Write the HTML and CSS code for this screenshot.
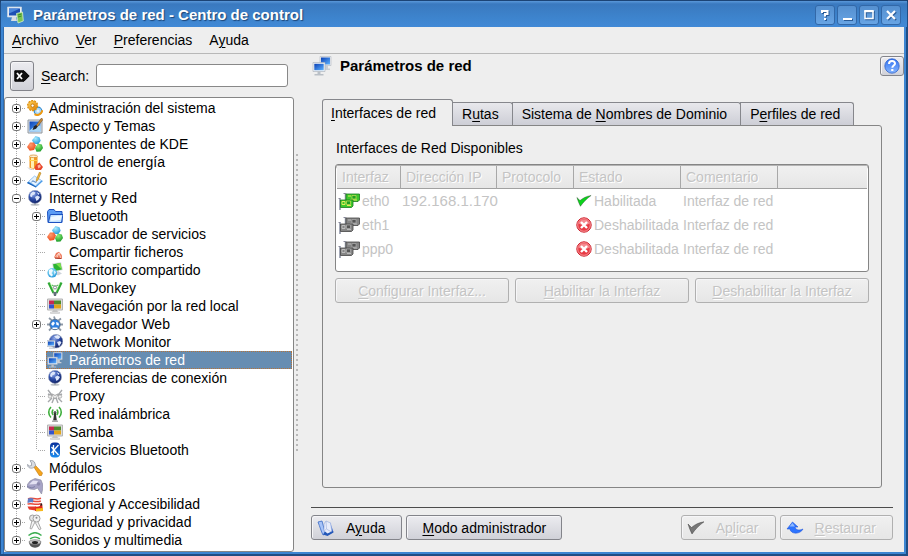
FILE: index.html
```html
<!DOCTYPE html>
<html lang="es">
<head>
<meta charset="utf-8">
<title>Parámetros de red - Centro de control</title>
<link rel="stylesheet" href="styles.css">
</head>
<body>
<svg class="defs" aria-hidden="true">
  <defs>
    <linearGradient id="g-screen" x1="0" y1="0" x2="1" y2="1"><stop offset="0" stop-color="#0a3fb5"/><stop offset="1" stop-color="#5fb4ff"/></linearGradient>
    <linearGradient id="g-orange" x1="0" y1="0" x2="1" y2="1"><stop offset="0" stop-color="#ffd75a"/><stop offset="1" stop-color="#e07a00"/></linearGradient>
    <linearGradient id="g-bt" x1="0" y1="0" x2="0" y2="1"><stop offset="0" stop-color="#0a2f9a"/><stop offset="1" stop-color="#1a8cf0"/></linearGradient>
    <radialGradient id="g-globe" cx=".38" cy=".3" r=".75"><stop offset="0" stop-color="#8fa8e8"/><stop offset=".5" stop-color="#2c4ca8"/><stop offset="1" stop-color="#0c1c5c"/></radialGradient>
    <radialGradient id="g-red" cx=".4" cy=".3" r=".7"><stop offset="0" stop-color="#ff9c70"/><stop offset="1" stop-color="#ee4a1a"/></radialGradient>
    <radialGradient id="g-green" cx=".4" cy=".3" r=".7"><stop offset="0" stop-color="#8ff07a"/><stop offset="1" stop-color="#1c9c28"/></radialGradient>
    <radialGradient id="g-cyan" cx=".4" cy=".3" r=".7"><stop offset="0" stop-color="#a8ecff"/><stop offset="1" stop-color="#2a9cdc"/></radialGradient>
    <linearGradient id="g-help" x1="0" y1="0" x2="0" y2="1"><stop offset="0" stop-color="#2f6ff0"/><stop offset="1" stop-color="#86b6ff"/></linearGradient>
    <linearGradient id="g-book" x1="0" y1="0" x2="1" y2="1"><stop offset="0" stop-color="#8ab0ff"/><stop offset="1" stop-color="#1c4cb8"/></linearGradient>
  </defs>
  <symbol id="i-gears" viewBox="0 0 16 16">
    <circle cx="11" cy="11" r="3.800" fill="#a9d6f7" stroke="#2f8ad0" stroke-width="1.200"/><circle cx="11" cy="11" r="1.500" fill="#e8f6ff"/>
    <path d="M7.500 14.200c3.500 2 7 0 8-4" fill="none" stroke="#f09a10" stroke-width="2"/>
    <circle cx="5.600" cy="5.600" r="4.900" fill="none" stroke="#e08e08" stroke-width="1.400" stroke-dasharray="2 1"/><circle cx="5.600" cy="5.600" r="4.500" fill="url(#g-orange)" stroke="#dd9010" stroke-width=".6"/><circle cx="5.600" cy="5.600" r="1.600" fill="#fff" stroke="#b66a00" stroke-width=".8"/>
  </symbol>
  <symbol id="i-brush" viewBox="0 0 16 16">
    <path d="M1 2h14v13H1z" fill="#dfe3e8" stroke="#9098a0"/><path d="M2.500 3.500h11v10h-11z" fill="url(#g-screen)"/><path d="M2.500 12.500l5-4 6-1v6h-11z" fill="#a9d8f8"/>
    <path d="M14.500 0L9 7.500l1.500 1.200L16 1.500z" fill="#c58a3c" stroke="#6a4416" stroke-width=".5"/><path d="M9 7l-2.200 1.300L5.500 12l3.600-1.200 1.600-2.300z" fill="#23242a"/>
  </symbol>
  <symbol id="i-balls" viewBox="0 0 16 16">
    <path d="M8.500 0l4 1.200 1.200 3.600-2.500 3.400-4.200-.5-2-3.500z" fill="url(#g-cyan)"/><path d="M3 6.500h4l2 3.300-2 4.200-4.200.8L0 11z" fill="url(#g-red)"/><path d="M11 7.500l3.800 1L16 12l-2.500 3.500-4 .2L8 12z" fill="url(#g-green)"/>
  </symbol>
  <symbol id="i-battery" viewBox="0 0 16 16">
    <path d="M2.500 2.500v11c0 1.500 8 1.500 8 0v-11z" fill="#f39a24"/><path d="M4 3v10.500c.8.500 2 .6 3 .6V3z" fill="#fff0b4"/><ellipse cx="6.500" cy="2.300" rx="4" ry="1.300" fill="#fff2d8" stroke="#d08428" stroke-width=".7"/><path d="M2.500 6h8v1h-8z" fill="#ffd24a"/>
    <path d="M9 10.500l3.500-2 1.800 2.500L16 13l-2 3H8.500l-1-2z" fill="#e8452a"/><path d="M10.500 11.500l2.500-1 .8 2.500-2.500 1.500z" fill="#ffb6a0"/><path d="M1 13.500c1 2 4 2.300 6 2" stroke="#ccc" fill="none"/>
  </symbol>
  <symbol id="i-desk" viewBox="0 0 16 16">
    <path d="M0 11L7 5l9 4-7 6.500z" fill="#4b9ae8"/><path d="M1.500 9.500L7.500 4l7 4.500-6 5.500z" fill="#e6f3ff" stroke="#76b4ee" stroke-width=".7"/><path d="M0 11l9 4.500v-1L1 10z" fill="#1c61b8"/>
    <path d="M12.500 0L9.500 7l-.3 2.500L11 8l3-7z" fill="#f4b93a" stroke="#a36e10" stroke-width=".5"/><path d="M4.500 10c2-2.500 3 1 5 0" stroke="#2b68b4" fill="none"/>
  </symbol>
  <symbol id="i-globe" viewBox="0 0 16 16">
    <ellipse cx="8" cy="14.700" rx="4.500" ry="1" fill="#bfc3c8"/><path d="M7 12h2v2.500H7z" fill="#8f949c"/><circle cx="8" cy="6.900" r="6.600" fill="url(#g-globe)" stroke="#a6b0c8" stroke-width=".6"/>
    <path d="M3.500 3.500l2.500-2 2.500 1-1 2-2 .8-.5 2-2-1zM8 7l2.500-1.500L13 7l-1.500 2.500L9.500 11zM9.500 2l3 1.500-1 1.500z" fill="#dce6fb"/>
  </symbol>
  <symbol id="i-folder" viewBox="0 0 16 16">
    <path d="M.5 3.500L2 1.500h5l1.500 2H15v11H1z" fill="#5a9cf4" stroke="#1c52c0"/><path d="M1.500 14l1.800-7.500H16l-1.500 8H1.500z" fill="#c2e2ff" stroke="#1c52c0"/><path d="M4 9l7-1.200L14.500 8l-1.200 4L3.500 13z" fill="#eef8ff"/>
  </symbol>
  <symbol id="i-shell" viewBox="0 0 16 16">
    <path d="M7 13.500L9 9l3-1.200L14.800 11l.3 3.200-4 .8z" fill="#ef7a5c"/><path d="M8.500 13l3.500-4 1.800 5M10 13.500l2-4.500" stroke="#ffe0d4" stroke-width=".8" fill="none"/><path d="M8 14.200l6.500.3" stroke="#a93a28"/>
  </symbol>
  <symbol id="i-share" viewBox="0 0 16 16">
    <path d="M5 1.500L14 0l2 8-9 2z" fill="#d9dde0"/><path d="M6 2.200l7.300-1.200 1.600 6.400L7.500 9z" fill="#2cb432"/><path d="M9 2l4.300-1 1.600 6.400z" fill="#7ee04e"/><path d="M11 9l4 2.500-4 2-3-1.500z" fill="#cdd3da"/>
    <circle cx="5.200" cy="10.800" r="4.800" fill="url(#g-cyan)"/><path d="M2 8l2.500-1 1.500 1.500L4.500 11 6 13l-1.500 1.500L2 12zM7 8.500l2 1.500-1.500 3z" fill="#f0faff"/>
  </symbol>
  <symbol id="i-donkey" viewBox="0 0 16 16">
    <path d="M1.500 2.500L6.500 13M14.500 2.500L9.500 13" stroke="#2fa834" stroke-width="2.200"/><path d="M3 2.500l4 9M13 2.500l-4 9" stroke="#9be88c" stroke-width=".7"/><path d="M5 5c2 1.500 4 1.500 6 0" fill="none" stroke="#3cb43c"/><circle cx="8" cy="7.500" r="1.500" fill="#fff" stroke="#8a8a9a"/><path d="M6 12h4l-1 4H7z" fill="#63707a"/>
  </symbol>
  <symbol id="i-screen" viewBox="0 0 16 16">
    <path d="M.5 1h15v11H.5z" fill="#dedede" stroke="#b4b4b4"/><path d="M2 2.500h5V6.500H2z" fill="#c62850"/><path d="M7 2.500h7V6.500H7z" fill="#4f8c2c"/><path d="M2 6.500h5v4H2z" fill="#3455cc"/><path d="M7 6.500h7v4H7z" fill="#e0a51c"/><path d="M6 12h4l1 2H5z" fill="#c4c4c4"/><path d="M3.500 14h9v1.500h-9z" fill="#e2e2e2" stroke="#bdbdbd" stroke-width=".5"/>
  </symbol>
  <symbol id="i-konq" viewBox="0 0 16 16">
    <path d="M2 2l3 2.500M7 .5l1 3M14 2.500l-2.500 2M0 8.500h3M13 8.500h3M2 14.500l3-3M14 14.500l-3-3" stroke="#8d98a6" stroke-width="1.800"/><circle cx="8" cy="8.500" r="5.200" fill="#2e80e0" stroke="#56687c" stroke-width=".8"/><path d="M4 8l2-2.500L8 7l-2 3zM9 6l2.500.8L12 9.500l-2.500-.5zM5.500 11.500h5V13h-5z" fill="#fff"/>
  </symbol>
  <symbol id="i-monitor" viewBox="0 0 16 16">
    <circle cx="9" cy="7.200" r="6.800" fill="url(#g-globe)" stroke="#8d9ab8" stroke-width=".6"/><path d="M7 2l4-1 2.500 2-2 2L9 4.500zM10 8l3-1 1.500 1.500-2.500 4z" fill="#dfe8fa"/><path d="M0 6.500h8v6H0z" fill="#eef2f6" stroke="#a4acb8" stroke-width=".6"/><path d="M1 7.500h6v4H1z" fill="url(#g-screen)"/><path d="M2 13.500h6v1.500H2z" fill="#d2d7dd"/>
  </symbol>
  <symbol id="i-net" viewBox="0 0 20 20">
    <path d="M8 .5h11v9H8z" fill="#e9edf1" stroke="#b1b7bf" stroke-width=".6"/><path d="M9 1.500h9v7H9z" fill="url(#g-screen)"/><path d="M13 10h3v2.500h2V14h-7v-1.500z" fill="#c9ced4"/>
    <path d="M1 6.500h12v9H1z" fill="#eef2f6" stroke="#a6adb7" stroke-width=".6"/><path d="M2.300 7.800h9.400v6.400H2.300z" fill="url(#g-screen)"/><path d="M5.500 15.500h3V18h3v1.500H2.500V18h3z" fill="#b9bfc6"/>
  </symbol>
  <symbol id="i-proxy" viewBox="0 0 16 16">
    <path d="M1 2l3 4 4 2 4-2 3-4M1 6l4 2M15 6l-4 2M5 15l2-5h2l2 5M1 14l4-4M15 14l-4-4" stroke="#a6a8ab" stroke-width="1.400" fill="none"/><circle cx="3" cy="8.500" r="1.700" fill="#eee" stroke="#9b9b9b" stroke-width=".7"/><circle cx="13" cy="8.500" r="1.700" fill="#eee" stroke="#9b9b9b" stroke-width=".7"/><path d="M5 6l3 1.500L11 6l-1.500 4h-3z" fill="#eee" stroke="#999" stroke-width=".6"/>
  </symbol>
  <symbol id="i-wifi" viewBox="0 0 16 16">
    <path d="M4 1C1 4 1 8.500 4 11.500M6.300 3.500c-1.600 1.500-1.600 4 0 5.500M12 1c3 3 3 7.500 0 10.500M9.700 3.500c1.600 1.500 1.600 4 0 5.500" fill="none" stroke="#3fae3c" stroke-width="1.600"/><circle cx="8" cy="6.500" r="1.500" fill="#555"/><path d="M7.200 7h1.600l1 7.500H6.200z" fill="#333"/><path d="M5 14.500h6V16H5z" fill="#aaa"/>
  </symbol>
  <symbol id="i-bt" viewBox="0 0 16 16">
    <rect x="3" y=".5" width="10" height="15" rx="4" fill="url(#g-bt)"/><path d="M6.500 3v10M11.500 3L7 8l4.500 5M4.500 5l2.500 3-2.500 3" fill="none" stroke="#fff" stroke-width="1.300"/>
  </symbol>
  <symbol id="i-wrench" viewBox="0 0 16 16">
    <path d="M6.500 6.500l2-1L15.500 13l-1 2.500-2 .3z" fill="#f6a51c" stroke="#bd7200" stroke-width=".6"/><path d="M.5 4.500l2 1.500 2-.5V3L3 .7C5 0 7.500 1 8 3.500l.7 2.300-2.400 2C4 8.800.5 8 .5 4.500z" fill="#d8dce2" stroke="#868d98" stroke-width=".7"/>
  </symbol>
  <symbol id="i-periph" viewBox="0 0 16 16">
    <path d="M0 7l3-4 5-2.500 6 1.500 2 5-.5 5-1 4-2-3-2-3-3 1.500L3 11 0 9z" fill="#a7a4c6" stroke="#87869c" stroke-width=".6"/><path d="M2 6.500l4-4 5 .5-1.500 3z" fill="#e3e1f2"/><path d="M0 8.500l5 1.500 3-1.500" stroke="#7e7ea6" fill="none"/><circle cx="11.500" cy="6" r="1.800" fill="#8d8aae"/>
  </symbol>
  <symbol id="i-flags" viewBox="0 0 16 16">
    <path d="M8 7l7 .5 1 7-8 .5z" fill="#e02818"/><path d="M8 7l7 .5.300 2L8 9.500z" fill="#222"/><path d="M9 12.500l7-.500v3l-7 .5z" fill="#f6b81c"/><path d="M1 2.500c4-2 7 1.500 13-.5l-1 8c-4 2-7-1-12 .5z" fill="#fff"/><path d="M1 2.800c4-2 7 1.500 13-.5M.8 5.500c4-2 7 1.500 13-.5M.5 8.200c4-2 7 1.500 13-.5" stroke="#e84a3a" stroke-width="1.500" fill="none"/><path d="M1 2.500c2-1 4-.5 5.500 0l-.5 4c-2-.5-3.500-.5-5.500.500z" fill="#5c7cc8"/><path d="M.5 10.500h8v4L2 13.500z" fill="#e4392a"/>
  </symbol>
  <symbol id="i-keys" viewBox="0 0 16 16">
    <path d="M5 6.500L3 14.500l1.500.5L8 8l4 7.500 2-.5-3-7" fill="#f2f2f2" stroke="#aaa" stroke-width="1"/><circle cx="5.500" cy="4" r="3" fill="#e6e6e6" stroke="#9e9e9e"/><circle cx="9.500" cy="4.500" r="3.500" fill="#f2f2f2" stroke="#9e9e9e"/><circle cx="9.500" cy="3.800" r="1" fill="#888"/>
  </symbol>
  <symbol id="i-sound" viewBox="0 0 16 16">
    <path d="M2 10c0-2 12-2 12 0-.2 3.500-2.500 5.700-6 5.700S2.200 13.500 2 10z" fill="#555"/><ellipse cx="8" cy="10" rx="6" ry="2.300" fill="#c6c6c6" stroke="#777" stroke-width=".6"/><ellipse cx="8" cy="10.500" rx="3" ry="1.500" fill="#222"/><path d="M1.500 3.500c4-3.500 9-3.500 13 0M3 6.800c3.500-2.300 6.500-2.300 10 0" fill="none" stroke="#40b054" stroke-width="1.400"/>
  </symbol>
  <symbol id="i-control" viewBox="0 0 18 18">
    <path d="M.5 1h14v10H.5z" fill="#e6eef6" stroke="#c8d4e2" stroke-width=".7"/><path d="M2 2.500h11v7H2z" fill="#1c50b4"/><path d="M2 2.500h11l-11 5z" fill="#4b88dc"/><path d="M5 11h4l1 4H4z" fill="#d6dce2"/><path d="M9.500 7.500l6-1.500.8 9-5.300 2z" fill="#79c455" stroke="#d8f0c8" stroke-width=".8"/><path d="M11 9l3.500-1M11 11l3.500-1" stroke="#3b8a28"/>
  </symbol>
  <symbol id="i-card" viewBox="0 0 22 18">
    <path d="M7.500 1v12" stroke="#9298a4" stroke-width="1.500"/><path d="M5.500 1.500h2" stroke="#889"/><path d="M8 2h13.500v6L20 9.500H8z" class="pcb"/><path d="M12 8h7M10 4h3" class="trace"/><path d="M14 3.500h4V7h-4z" class="chip"/>
    <path d="M2 6v12" stroke="#868da0" stroke-width="1.500"/><path d="M.5 6.500H2" stroke="#889"/><path d="M2.500 8H15v6l-1.500 1.500h-11z" class="pcb"/><path d="M4 9.500h3v3H4zM9 13.500h4" class="trace"/><path d="M8.500 9h4v3.500h-4z" class="chip"/>
  </symbol>
  <symbol id="i-check" viewBox="0 0 18 14">
    <path d="M1 3l3.500 3.500C8 3.500 12 1.500 17 .8 12 4.500 8 8.500 5 13 3.500 10 2 6.500 1 3z" fill="currentColor" stroke="#222" stroke-opacity=".55" stroke-width=".7"/>
  </symbol>
  <symbol id="i-error" viewBox="0 0 16 16">
    <circle cx="8" cy="8" r="7.200" fill="#e83a44" stroke="#cc2430"/><circle cx="8" cy="8" r="6.300" fill="none" stroke="#fbb" stroke-width=".7"/><path d="M2.500 6.500a5.800 5.800 0 0111 0C10 8.500 6 8.500 2.500 6.500z" fill="#f58a90"/><path d="M5 5l6 6M11 5l-6 6" stroke="#fff" stroke-width="2.400"/>
  </symbol>
  <symbol id="i-help" viewBox="0 0 16 16">
    <circle cx="8" cy="8" r="7.200" fill="url(#g-help)" stroke="#2f62cc" stroke-width=".8"/><path d="M5 6c0-3.800 6-3.800 6-.5 0 2-2.700 2-2.700 4.300" fill="none" stroke="#fff" stroke-width="2"/><path d="M7.200 11h2.200v2H7.200z" fill="#fff"/>
  </symbol>
  <symbol id="i-book" viewBox="0 0 18 18">
    <path d="M1 3l4-1 3.500 13L6 16C4 12 3 8 1 3z" fill="#a8c4f8" stroke="#3868c4" stroke-width=".8"/><path d="M13 3l3.500 10L13 15z" fill="url(#g-book)"/><path d="M9 2l4.500 2 1.500 9-5 2.500L7 12V5z" fill="#e8ecfa" stroke="#8ea6d8" stroke-width=".6"/><path d="M9 2l.500 8L7 12M9.500 10l5 3" fill="none" stroke="#a8b8e0" stroke-width=".7"/><path d="M6 15.500l4.500 1.500 6-3.500-.8-1.500-5.200 2.500L8 12.500z" fill="#2458b8"/>
  </symbol>
  <symbol id="i-undo" viewBox="0 0 18 14">
    <path d="M6.500 1l5.500 5H9c.500 3 4 4 8 2-2.500 5.500-12.500 5.500-13 0H1z" fill="#2d74ff" stroke="#2458dc" stroke-width=".6"/><path d="M6.500 2L9 5.500H3.500z" fill="#90baff"/>
  </symbol>
  <symbol id="i-clear" viewBox="0 0 16 12">
    <path d="M.8.8H10L15.200 6 10 11.200H.8z" fill="#111" stroke="#000"/><path d="M3 3l5 6M8 3L3 9" stroke="#fff" stroke-width="1.800"/>
  </symbol>
</svg>

<div class="window">
  <header class="titlebar">
    <svg class="app-icon"><use href="#i-control"/></svg>
    <h1>Parámetros de red - Centro de control</h1>
    <div class="window-buttons">
      <button type="button" aria-label="Ayuda contextual"><svg viewBox="0 0 12 12"><path d="M3 4V2h5.500v3H6v2.500M5 10h2" fill="none" stroke="#fff" stroke-width="2"/></svg></button>
      <button type="button" aria-label="Minimizar"><svg viewBox="0 0 12 12"><path d="M2 10h9" stroke="#fff" stroke-width="2"/></svg></button>
      <button type="button" aria-label="Maximizar"><svg viewBox="0 0 12 12"><path d="M2 2.500h8v7H2z" fill="none" stroke="#fff" stroke-width="1.500"/><path d="M1.300 2h9.400" stroke="#fff" stroke-width="2"/></svg></button>
      <button type="button" aria-label="Cerrar"><svg viewBox="0 0 12 12"><path d="M2 2l8 8M10 2l-8 8" stroke="#fff" stroke-width="2.200"/></svg></button>
    </div>
  </header>

  <nav class="menubar">
    <button type="button"><u>A</u>rchivo</button>
    <button type="button"><u>V</u>er</button>
    <button type="button"><u>P</u>referencias</button>
    <button type="button">A<u>y</u>uda</button>
  </nav>

  <div class="body">
    <aside class="sidebar">
      <div class="search">
        <button class="btn clear" type="button" aria-label="Limpiar"><svg><use href="#i-clear"/></svg></button>
        <label for="search"><u>S</u>earch:</label>
        <input id="search" type="text">
      </div>
      <ul class="tree">
        <li><div class="row"><button class="toggle" type="button" aria-label="Expandir"></button><a href="#"><svg><use href="#i-gears"/></svg>Administración del sistema</a></div></li>
        <li><div class="row"><button class="toggle" type="button" aria-label="Expandir"></button><a href="#"><svg><use href="#i-brush"/></svg>Aspecto y Temas</a></div></li>
        <li><div class="row"><button class="toggle" type="button" aria-label="Expandir"></button><a href="#"><svg><use href="#i-balls"/></svg>Componentes de KDE</a></div></li>
        <li><div class="row"><button class="toggle" type="button" aria-label="Expandir"></button><a href="#"><svg><use href="#i-battery"/></svg>Control de energía</a></div></li>
        <li><div class="row"><button class="toggle" type="button" aria-label="Expandir"></button><a href="#"><svg><use href="#i-desk"/></svg>Escritorio</a></div></li>
        <li><div class="row"><button class="toggle open" type="button" aria-label="Contraer"></button><a href="#"><svg><use href="#i-globe"/></svg>Internet y Red</a></div>
          <ul>
            <li><div class="row"><button class="toggle" type="button" aria-label="Expandir"></button><a href="#"><svg><use href="#i-folder"/></svg>Bluetooth</a></div></li>
            <li><div class="row leaf"><a href="#"><svg><use href="#i-balls"/></svg>Buscador de servicios</a></div></li>
            <li><div class="row leaf"><a href="#"><svg><use href="#i-shell"/></svg>Compartir ficheros</a></div></li>
            <li><div class="row leaf"><a href="#"><svg><use href="#i-share"/></svg>Escritorio compartido</a></div></li>
            <li><div class="row leaf"><a href="#"><svg><use href="#i-donkey"/></svg>MLDonkey</a></div></li>
            <li><div class="row leaf"><a href="#"><svg><use href="#i-screen"/></svg>Navegación por la red local</a></div></li>
            <li><div class="row"><button class="toggle" type="button" aria-label="Expandir"></button><a href="#"><svg><use href="#i-konq"/></svg>Navegador Web</a></div></li>
            <li><div class="row leaf"><a href="#"><svg><use href="#i-monitor"/></svg>Network Monitor</a></div></li>
            <li><div class="row leaf"><a class="selected" href="#"><svg><use href="#i-net"/></svg>Parámetros de red</a></div></li>
            <li><div class="row leaf"><a href="#"><svg><use href="#i-globe"/></svg>Preferencias de conexión</a></div></li>
            <li><div class="row leaf"><a href="#"><svg><use href="#i-proxy"/></svg>Proxy</a></div></li>
            <li><div class="row leaf"><a href="#"><svg><use href="#i-wifi"/></svg>Red inalámbrica</a></div></li>
            <li><div class="row leaf"><a href="#"><svg><use href="#i-screen"/></svg>Samba</a></div></li>
            <li><div class="row leaf"><a href="#"><svg><use href="#i-bt"/></svg>Servicios Bluetooth</a></div></li>
          </ul>
        </li>
        <li><div class="row"><button class="toggle" type="button" aria-label="Expandir"></button><a href="#"><svg><use href="#i-wrench"/></svg>Módulos</a></div></li>
        <li><div class="row"><button class="toggle" type="button" aria-label="Expandir"></button><a href="#"><svg><use href="#i-periph"/></svg>Periféricos</a></div></li>
        <li><div class="row"><button class="toggle" type="button" aria-label="Expandir"></button><a href="#"><svg><use href="#i-flags"/></svg>Regional y Accesibilidad</a></div></li>
        <li><div class="row"><button class="toggle" type="button" aria-label="Expandir"></button><a href="#"><svg><use href="#i-keys"/></svg>Seguridad y privacidad</a></div></li>
        <li><div class="row"><button class="toggle" type="button" aria-label="Expandir"></button><a href="#"><svg><use href="#i-sound"/></svg>Sonidos y multimedia</a></div></li>
      </ul>
    </aside>
    <div class="splitter"></div>

    <main class="content">
      <div class="heading">
        <svg><use href="#i-net"/></svg>
        <h2>Parámetros de red</h2>
        <button class="btn help" type="button" aria-label="Ayuda rápida"><svg><use href="#i-help"/></svg></button>
      </div>

      <section class="tabs">
        <div class="tablist" role="tablist">
          <button class="tab active" type="button" role="tab" aria-selected="true"><u>I</u>nterfaces de red</button>
          <button class="tab" type="button" role="tab">R<u>u</u>tas</button>
          <button class="tab" type="button" role="tab">Sistema de <u>N</u>ombres de Dominio</button>
          <button class="tab" type="button" role="tab">P<u>e</u>rfiles de red</button>
        </div>
        <div class="panel" role="tabpanel">
          <h3 id="list-title">Interfaces de Red Disponibles</h3>
          <div class="list">
            <table aria-labelledby="list-title">
              <colgroup><col class="c-if"><col class="c-ip"><col class="c-proto"><col class="c-state"><col class="c-note"><col></colgroup>
              <thead><tr><th>Interfaz</th><th>Dirección IP</th><th>Protocolo</th><th>Estado</th><th>Comentario</th><th></th></tr></thead>
              <tbody>
                <tr><td><span class="cell"><svg class="card on"><use href="#i-card"/></svg>eth0</span></td><td class="ip">192.168.1.170</td><td></td><td><span class="cell"><svg class="state ok"><use href="#i-check"/></svg>Habilitada</span></td><td>Interfaz de red</td><td></td></tr>
                <tr><td><span class="cell"><svg class="card"><use href="#i-card"/></svg>eth1</span></td><td></td><td></td><td><span class="cell"><svg class="state"><use href="#i-error"/></svg>Deshabilitada</span></td><td>Interfaz de red</td><td></td></tr>
                <tr><td><span class="cell"><svg class="card"><use href="#i-card"/></svg>ppp0</span></td><td></td><td></td><td><span class="cell"><svg class="state"><use href="#i-error"/></svg>Deshabilitada</span></td><td>Interfaz de red</td><td></td></tr>
              </tbody>
            </table>
          </div>
          <div class="actions">
            <button class="btn" type="button" disabled><span><u>C</u>onfigurar Interfaz...</span></button>
            <button class="btn" type="button" disabled><span><u>H</u>abilitar la Interfaz</span></button>
            <button class="btn" type="button" disabled><span><u>D</u>eshabilitar la Interfaz</span></button>
          </div>
        </div>
      </section>

      <footer class="footer">
        <button class="btn icon" type="button"><svg><use href="#i-book"/></svg><span>A<u>y</u>uda</span></button>
        <button class="btn wide" type="button"><span><u>M</u>odo administrador</span></button>
        <button class="btn icon push" type="button" disabled><svg class="grey"><use href="#i-check"/></svg><span>Ap<u>l</u>icar</span></button>
        <button class="btn icon" type="button" disabled><svg><use href="#i-undo"/></svg><span><u>R</u>estaurar</span></button>
      </footer>
    </main>
  </div>
</div>
</body>
</html>
```
FILE: styles.css
```css
* { box-sizing: border-box; }

body {
  margin: 0;
  background: #1c3c66;
  color: #000;
  font: 14px/18px "Liberation Sans", Arial, sans-serif;
}

h1, h2, h3, ul { margin: 0; padding: 0; font-size: inherit; font-weight: inherit; list-style: none; }
button, input { font: inherit; color: inherit; margin: 0; }
svg { display: block; flex: none; }
u { text-underline-offset: 2px; text-decoration-thickness: 1px; }
.defs { position: absolute; width: 0; height: 0; }

.window {
  display: flex;
  flex-direction: column;
  min-height: 100vh;
  padding: 0 4px 4px;
  border-radius: 4px 4px 0 0;
  background: linear-gradient(90deg, #1f4d84 0 1px, #3c85d2 1px 3px, #2f6cb0 3px 4px, #3c85d2 4px calc(100% - 2px), #1f4d84 calc(100% - 2px));
  box-shadow: inset 0 -2px #1f4d84;
}

.titlebar {
  display: flex;
  align-items: center;
  gap: 8px;
  height: 27px;
  margin: 0 -3px;
  padding: 1px 6px 0;
  border-top: 1px solid #1c4476;
  background: linear-gradient(#5a98da, #3a79bf 3px, #3d83cc 60%, #4189d6);
}
.app-icon { width: 18px; height: 18px; }
.titlebar h1 {
  color: #fff;
  font-size: 15px;
  font-weight: bold;
  text-shadow: 1px 1px 1px #1c4476;
}
.window-buttons { display: flex; gap: 2px; margin-left: auto; }
.window-buttons button {
  display: grid;
  place-items: center;
  width: 20px;
  height: 20px;
  padding: 0;
  border: 1px solid #3268a8;
  border-radius: 3px;
  background: linear-gradient(#5590d0, #67a4e4);
}
.window-buttons svg { width: 12px; height: 12px; filter: drop-shadow(1px 1px 0 #2a5c98); }

.menubar {
  display: flex;
  gap: 17px;
  height: 27px;
  padding: 0 8px;
  border-bottom: 1px solid #b8b8b8;
  background: #eee;
}
.menubar button { padding: 0; border: 0; background: none; }

.body { display: flex; flex: 1; background: #eee; }

.sidebar { display: flex; flex-direction: column; flex: none; width: 290px; }
.search { display: flex; align-items: center; gap: 7px; height: 43px; padding: 0 6px; }
.search input {
  flex: 1;
  min-width: 0;
  height: 23px;
  padding: 0 4px;
  border: 1px solid #888;
  border-radius: 3px;
  background: #fff;
}

.btn {
  display: inline-flex;
  align-items: center;
  justify-content: center;
  height: 25px;
  padding: 0 4px;
  border: 1px solid #83848a;
  border-radius: 3px;
  background: linear-gradient(#ececf0, #d0d1d8);
  box-shadow: inset 1px 1px #f6f6f8;
}
.btn:disabled {
  color: #c4c4c4;
  border-color: #b0b0b0;
  background: linear-gradient(#f0f0f0, #e6e6e6);
  text-shadow: 1px 1px #fff;
}
.btn.clear { width: 24px; height: 30px; padding: 0; }
.btn.clear svg { width: 16px; height: 12px; }

.tree {
  flex: 1;
  padding: 1px 1px 1px 0;
  border: 1px solid #858585;
  border-radius: 3px;
  background: repeating-linear-gradient(#fff 0 1px, #a8a8a8 1px 2px) 11px 0 / 1px calc(100% - 11px) no-repeat #fff;
}
.tree ul {
  padding-left: 20px;
  background: repeating-linear-gradient(#fff 0 1px, #a8a8a8 1px 2px) 31px 0 / 1px calc(100% - 9px) no-repeat;
}
.row {
  display: flex;
  align-items: center;
  height: 18px;
  padding-left: 7px;
}
.row::before {
  content: "";
  order: 1;
  width: 5px;
  height: 1px;
  background: repeating-linear-gradient(90deg, #fff 0 1px, #a8a8a8 1px 2px);
}
.row.leaf { padding-left: 12px; }
.row.leaf::before { width: 9px; }
.toggle {
  width: 9px;
  height: 9px;
  padding: 0;
  border: 1px solid #777;
  border-radius: 3px;
  background:
    linear-gradient(#000, #000) center / 5px 1px no-repeat,
    linear-gradient(#000, #000) center / 1px 5px no-repeat,
    #fff;
}
.toggle.open { background: linear-gradient(#000, #000) center / 5px 1px no-repeat #fff; }
.row a {
  display: flex;
  order: 2;
  flex: 1;
  align-items: center;
  gap: 6px;
  height: 18px;
  border: 1px solid transparent;
  color: #000;
  text-decoration: none;
  white-space: nowrap;
}
.row a svg { width: 16px; height: 16px; }
.row a.selected {
  color: #fff;
  background: #678db2;
  border: 1px dotted #b87338;
}

.splitter {
  flex: none;
  width: 6px;
  margin: 100px 0;
  background: linear-gradient(#b8b8b8, #b8b8b8) 2px 0 / 2px 2px no-repeat;
  background: repeating-linear-gradient(#b8b8b8 0 2px, transparent 2px 5px) 2px 0 / 2px 100% no-repeat;
}

.content {
  display: flex;
  flex-direction: column;
  flex: 1;
  min-width: 0;
  padding: 2px 11px 12px;
}
.heading {
  display: flex;
  align-items: flex-start;
  gap: 8px;
  height: 43px;
  margin-right: -11px;
}
.heading > svg { width: 20px; height: 20px; margin-left: 1px; }
.heading h2 { font-size: 15px; font-weight: bold; line-height: 20px; }
.btn.help { width: 24px; height: 20px; margin-left: auto; padding: 0; }
.btn.help svg { width: 16px; height: 16px; }

.tabs { display: flex; flex-direction: column; flex: 1; margin: 0 11px; }
.tablist { display: flex; align-items: flex-end; height: 26px; }
.tab {
  height: 23px;
  margin-left: -1px;
  padding: 0 13px 0 9px;
  border: 1px solid #86878c;
  border-bottom: 0;
  border-radius: 0 3px 0 0;
  background: linear-gradient(#e8e8ec, #cdced6);
  white-space: nowrap;
}
.tab.active {
  z-index: 1;
  height: 27px;
  margin: 0 0 -1px;
  padding: 0 16px 1px 8px;
  border-radius: 3px 3px 0 0;
  background: #eee;
}
.panel {
  flex: 1;
  padding: 13px 12px;
  border: 1px solid #858585;
  border-radius: 0 3px 3px 3px;
  background: #eee;
}
.panel h3 { padding-left: 1px; }

.list {
  height: 108px;
  margin-top: 7px;
  padding: 0 1px;
  border: 1px solid #858585;
  border-radius: 3px;
  background: #fff;
  box-shadow: inset 0 2px #b4b4b4;
}
table { width: 100%; margin-top: 1px; table-layout: fixed; border-collapse: separate; border-spacing: 0; color: #c4c4c4; }
.c-if { width: 64px; }
.c-ip { width: 96px; }
.c-proto { width: 77px; }
.c-state { width: 107px; }
.c-note { width: 97px; }
th, td { padding: 0; text-align: left; font-weight: normal; white-space: nowrap; }
th {
  height: 23px;
  padding-left: 5px;
  border-right: 1px solid #a8a8a8;
  border-bottom: 1px solid #a0a0a0;
  background: linear-gradient(#f0f0f0, #e6e6e6);
  text-shadow: 1px 1px #fff;
}
th:last-child { border-right: 0; }
td { height: 24px; padding-left: 2px; }
td:first-child { padding-left: 1px; }
td.ip { padding-left: 1px; font-size: 15px; }
.cell { display: flex; align-items: center; gap: 2px; }
.card {
  --pcb: #858585;
  --edge: #444;
  --trace: #bbb;
  --chip: #555;
  width: 22px;
  height: 18px;
}
.card.on {
  --pcb: #3cc82c;
  --edge: #1c7a20;
  --trace: #e4e85c;
  --chip: #1f9f24;
}
.pcb { fill: var(--pcb); stroke: var(--edge); stroke-width: .8; }
.trace { fill: none; stroke: var(--trace); }
.chip { fill: var(--chip); stroke: var(--trace); stroke-width: .6; }
.state { width: 16px; height: 16px; }
.state.ok { color: #0bd41c; }

.actions { display: grid; grid-template-columns: repeat(3, 1fr); gap: 6px; margin-top: 6px; }

.footer {
  display: flex;
  gap: 4px;
  margin-top: 19px;
  padding-top: 7px;
  border-top: 1px solid #4c4c4c;
}
.btn.icon { padding: 0 16px 0 5px; }
.btn.icon svg { width: 18px; height: 18px; margin-right: 11px; }
.btn.wide { padding: 0 15px; }
.btn.push { margin-left: auto; }
.btn .grey { color: #777; }
```
